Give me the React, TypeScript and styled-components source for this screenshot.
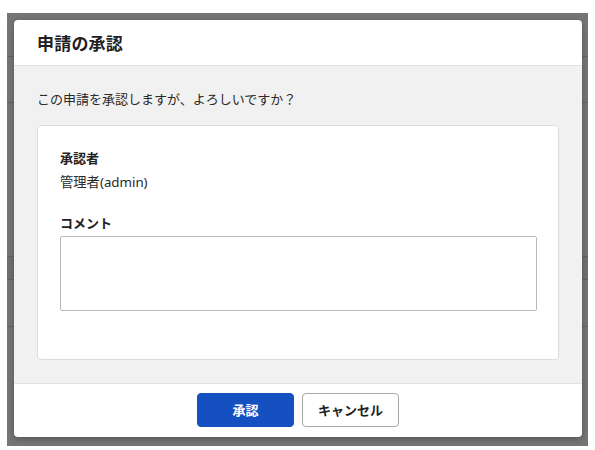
import React from "react";
import styled, { createGlobalStyle } from "styled-components";

const GlobalStyle = createGlobalStyle`
  html, body { margin: 0; padding: 0; background: #ffffff; }
  body {
    font-family: "Noto Sans", "Noto Sans CJK JP", sans-serif;
    color: #222;
  }
  * { box-sizing: border-box; }
`;

const Page = styled.div`
  width: 595px;
  height: 450px;
  padding: 13px 7px 4px 7px;
  background: #fff;
`;

const Stage = styled.div`
  position: relative;
  width: 581px;
  height: 433px;
  overflow: hidden;
  background: #fff;
`;

const UnderList = styled.div`
  display: flex;
  flex-direction: column;
`;

const UnderRow = styled.div<{ $h: number; $shade?: boolean }>`
  height: ${(p) => p.$h}px;
  border-bottom: 1px solid #d6d6d6;
  background: ${(p) => (p.$shade ? "#f4f4f4" : "#fff")};
`;

const Overlay = styled.div`
  position: absolute;
  inset: 0;
  background: rgba(0, 0, 0, 0.54);
  padding: 7px 6px 9px 7px;
  display: flex;
`;

const Modal = styled.div`
  flex: 1;
  display: flex;
  flex-direction: column;
  background: #fff;
  border-radius: 4px;
  overflow: hidden;
  box-shadow: 0 2px 6px rgba(0, 0, 0, 0.25);
`;

const Header = styled.div`
  height: 46px;
  display: flex;
  align-items: center;
  padding: 0 23px;
  border-bottom: 1px solid #e2e2e2;
`;

const Title = styled.h2`
  margin: 0;
  font-size: 17px;
  font-weight: 700;
  color: #1f1f1f;
  letter-spacing: 0.2px;
`;

const Body = styled.div`
  flex: 1;
  background: #f1f1f1;
  padding: 23px 23px 23px 23px;
  display: flex;
  flex-direction: column;
  gap: 16px;
`;

const Message = styled.p`
  margin: 0;
  font-size: 13px;
  line-height: 20px;
  color: #2a2a2a;
`;

const Card = styled.div`
  flex: 1;
  background: #fff;
  border: 1px solid #dcdcdc;
  border-radius: 4px;
  padding: 22px 21px 22px 22px;
  display: flex;
  flex-direction: column;
`;

const Label = styled.div<{ $gapTop?: number }>`
  font-size: 13px;
  font-weight: 700;
  line-height: 20px;
  color: #222;
  margin-top: ${(p) => p.$gapTop ?? 0}px;
`;

const Value = styled.div`
  font-size: 13.3px;
  line-height: 20px;
  color: #2a2a2a;
  margin-top: 4px;
`;

const TextArea = styled.textarea`
  margin-top: 3px;
  width: 100%;
  height: 75px;
  border: 1px solid #b8b8b8;
  border-radius: 2px;
  resize: none;
  font-family: inherit;
  font-size: 13px;
  padding: 6px 8px;
  outline: none;
`;

const Footer = styled.div`
  height: 54px;
  border-top: 1px solid #e2e2e2;
  display: flex;
  align-items: center;
  justify-content: center;
  gap: 8px;
  padding-bottom: 2px;
`;

const Button = styled.button<{ $primary?: boolean }>`
  width: 97px;
  height: 34px;
  border-radius: 4px;
  font-family: "Noto Sans", "Noto Sans CJK JP", sans-serif;
  font-size: 13px;
  font-weight: 700;
  cursor: pointer;
  border: 1px solid ${(p) => (p.$primary ? "#1550c0" : "#a8a8a8")};
  background: ${(p) => (p.$primary ? "#1550c0" : "#fff")};
  color: ${(p) => (p.$primary ? "#fff" : "#222")};
`;

export default function App() {
  return (
    <>
      <GlobalStyle />
      <Page>
        <Stage>
          <UnderList>
            <UnderRow $h={44} />
            <UnderRow $h={46} />
            <UnderRow $h={154} />
            <UnderRow $h={23} $shade />
            <UnderRow $h={47} />
          </UnderList>
          <Overlay>
            <Modal role="dialog" aria-label="申請の承認">
              <Header>
                <Title>申請の承認</Title>
              </Header>
              <Body>
                <Message>この申請を承認しますが、よろしいですか？</Message>
                <Card>
                  <Label>承認者</Label>
                  <Value>管理者(admin)</Value>
                  <Label $gapTop={21}>コメント</Label>
                  <TextArea />
                </Card>
              </Body>
              <Footer>
                <Button $primary>承認</Button>
                <Button>キャンセル</Button>
              </Footer>
            </Modal>
          </Overlay>
        </Stage>
      </Page>
    </>
  );
}
